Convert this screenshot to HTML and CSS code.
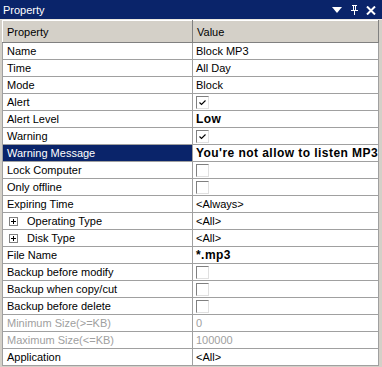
FILE: index.html
```html
<!DOCTYPE html>
<html>
  <head>
    <link rel="stylesheet" href="styles.css">
  </head>
  <body>
    <div class="panel">
      <div class="titlebar">
        <span class="title">Property</span>
        <div class="tools">
          <svg width="11" height="8" viewBox="0 0 11 8"><path d="M0 1 H10 L5 7 Z" fill="#fff"/></svg>
          <svg width="9" height="10" viewBox="0 0 9 10"><path d="M2 0 H7 V1 H6 V5 H8 V6 H5 V10 H4 V6 H1 V5 H3 V1 H2 Z M4 1 V5 H5 V1 Z" fill="#fff"/></svg>
          <svg width="10" height="9" viewBox="0 0 10 9"><path d="M1 0.5 L9 8.5 M9 0.5 L1 8.5" stroke="#fff" stroke-width="2"/></svg>
        </div>
      </div>
      <table class="grid">
        <thead>
          <tr>
            <th class="col-prop">Property</th>
            <th>Value</th>
          </tr>
        </thead>
        <tbody>
          <tr><td>Name</td><td>Block MP3</td></tr>
          <tr><td>Time</td><td>All Day</td></tr>
          <tr><td>Mode</td><td>Block</td></tr>
          <tr><td>Alert</td><td><span class="check"><svg width="11" height="11" viewBox="0 0 11 11"><path d="M2.5 5.5 L4.5 7.5 L8.5 3.5" stroke="#000" stroke-width="1.1" fill="none"/></svg></span></td></tr>
          <tr><td>Alert Level</td><td class="bold">Low</td></tr>
          <tr><td>Warning</td><td><span class="check"><svg width="11" height="11" viewBox="0 0 11 11"><path d="M2.5 5.5 L4.5 7.5 L8.5 3.5" stroke="#000" stroke-width="1.1" fill="none"/></svg></span></td></tr>
          <tr class="selected"><td>Warning Message</td><td class="bold">You're not allow to listen MP3</td></tr>
          <tr><td>Lock Computer</td><td><span class="check"></span></td></tr>
          <tr><td>Only offline</td><td><span class="check"></span></td></tr>
          <tr><td>Expiring Time</td><td>&lt;Always&gt;</td></tr>
          <tr><td><span class="plus"></span>Operating Type</td><td>&lt;All&gt;</td></tr>
          <tr><td><span class="plus"></span>Disk Type</td><td>&lt;All&gt;</td></tr>
          <tr><td>File Name</td><td class="bold">*.mp3</td></tr>
          <tr><td>Backup before modify</td><td><span class="check"></span></td></tr>
          <tr><td>Backup when copy/cut</td><td><span class="check"></span></td></tr>
          <tr><td>Backup before delete</td><td><span class="check"></span></td></tr>
          <tr class="disabled"><td>Minimum Size(&gt;=KB)</td><td>0</td></tr>
          <tr class="disabled"><td>Maximum Size(&lt;=KB)</td><td>100000</td></tr>
          <tr><td>Application</td><td>&lt;All&gt;</td></tr>
        </tbody>
      </table>
    </div>
  </body>
</html>
```

FILE: styles.css
```css
body {
  margin: 0;
  background-color: #d4d0c8;
  font-family: "Liberation Sans", Arial, sans-serif;
  font-size: 11px;
}
.panel {
  width: 382px;
  height: 367px;
  overflow: hidden;
}
.titlebar {
  display: flex;
  justify-content: space-between;
  align-items: center;
  height: 19px;
  background-color: #0a246a;
  color: #fff;
  padding: 0 6px 0 3px;
  border-bottom: 1px solid #ece9e2;
}
.title {
  font-size: 11px;
}
.tools {
  display: flex;
  align-items: center;
  gap: 7px;
  padding-top: 1px;
}
.grid {
  margin-left: 2px;
  width: 377px;
  table-layout: fixed;
  border-collapse: collapse;
  background-color: #fff;
  border-left: 1px solid #404040;
}
.grid th {
  height: 20px;
  background-color: #d4d0c8;
  font-weight: normal;
  text-align: left;
  padding: 1px 0 0 4px;
  border-top: 1px solid #fff;
  border-left: 1px solid #fff;
  border-right: 1px solid #808080;
  border-bottom: 1px solid #808080;
  font-size: 11px;
}
.col-prop {
  width: 185px;
}
.grid td {
  height: 16px;
  padding: 0 0 0 4px;
  border: 1px solid #a0a0a0;
  border-top: none;
  white-space: nowrap;
  overflow: hidden;
  font-size: 11px;
  line-height: 14px;
}
.grid td + td {
  padding-left: 3px;
}
.grid td.bold {
  font-weight: bold;
  font-size: 12px;
  letter-spacing: 0.45px;
}
.selected td:first-child {
  background-color: #0a246a;
  color: #fff;
}
.disabled td {
  color: #a0a0a0;
}
.check {
  display: block;
  width: 11px;
  height: 11px;
  background-color: #fff;
  border-top: 1px solid #808080;
  border-left: 1px solid #808080;
  border-right: 1px solid #e0e0e0;
  border-bottom: 1px solid #e0e0e0;
}
.check svg {
  display: block;
}
.plus {
  display: inline-block;
  vertical-align: -1px;
  width: 7px;
  height: 7px;
  border: 1px solid #808080;
  margin: 0 9px 0 2px;
  background: linear-gradient(#000, #000) center / 5px 1px no-repeat,
    linear-gradient(#000, #000) center / 1px 5px no-repeat, #fff;
}
```
